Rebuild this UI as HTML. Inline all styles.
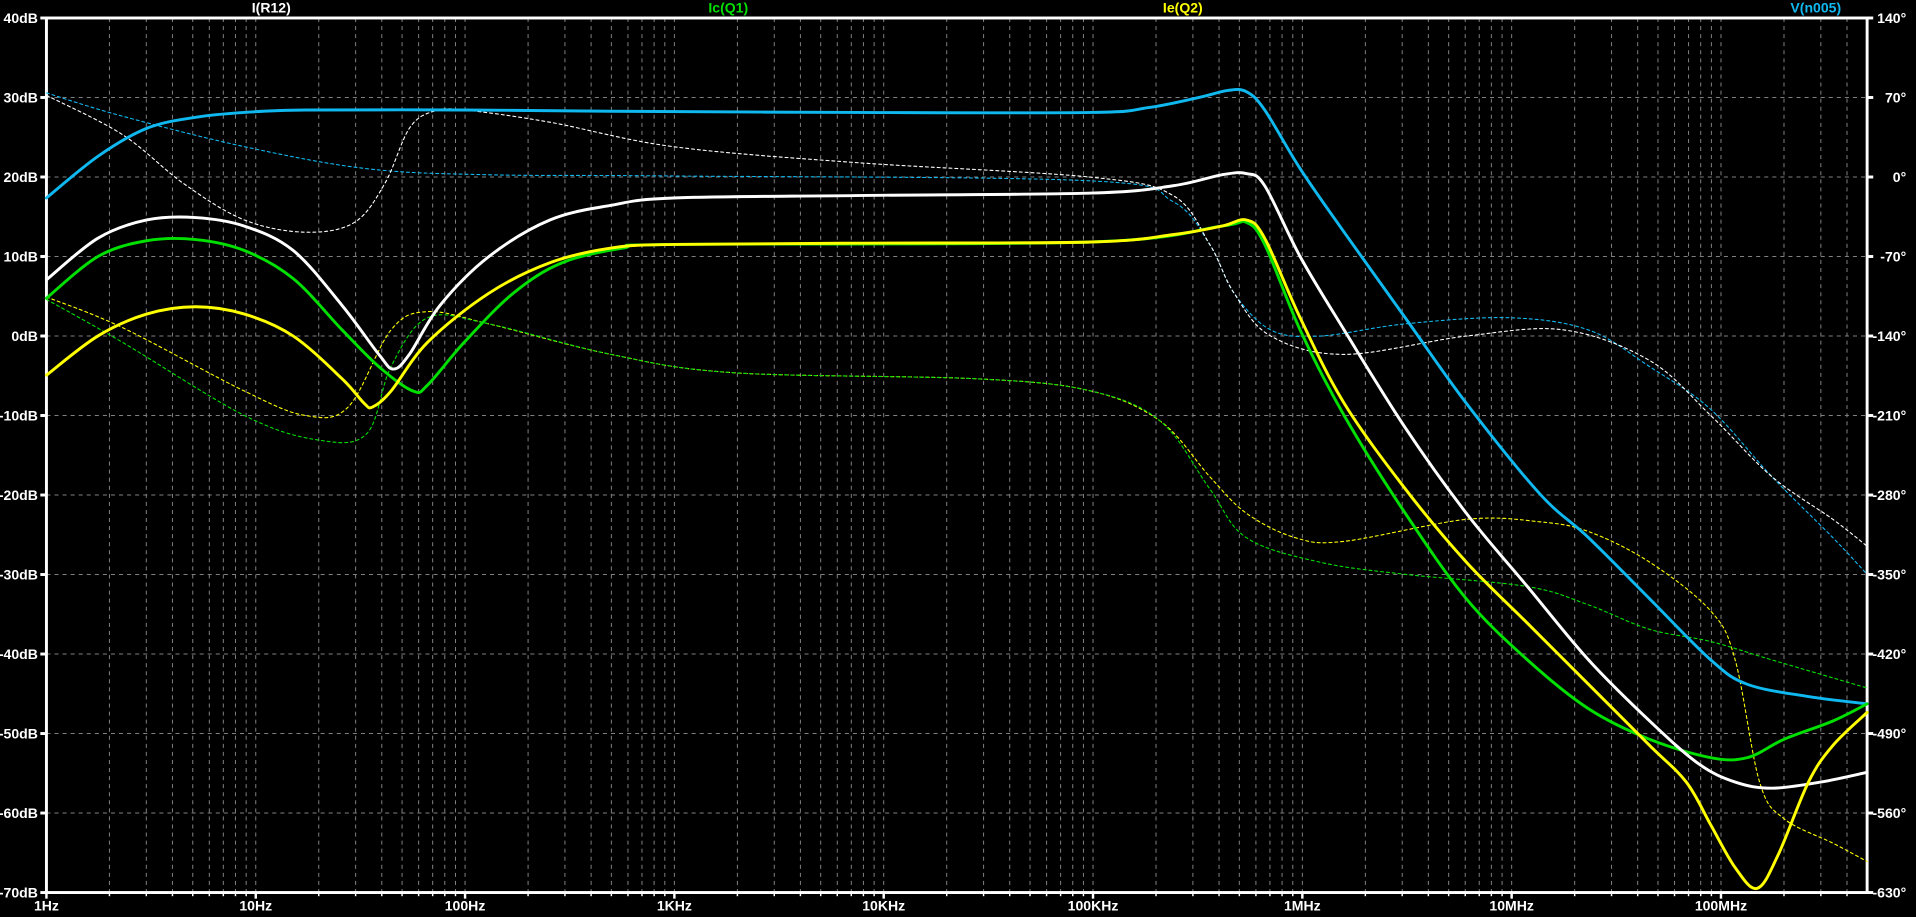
<!DOCTYPE html>
<html><head><meta charset="utf-8"><style>
html,body{margin:0;padding:0;background:#000;overflow:hidden}
svg{display:block}
text{font-family:"Liberation Sans",sans-serif;font-weight:bold;fill:#fff;font-size:11.5px}
</style></head><body>
<svg id="s" width="1916" height="917" viewBox="0 0 1568 750.4" xmlns="http://www.w3.org/2000/svg">
<rect width="1568" height="750.4" fill="#000"/>
<g id="grid" stroke="#808080" stroke-width="0.82" stroke-dasharray="3.3 3.3" fill="none"></g>
<g id="axes" stroke="#fff" fill="none"></g>
<g id="labels"></g>
<g id="traces" fill="none" stroke-linejoin="round" stroke-linecap="round"></g>
<text x="222" y="10" text-anchor="middle">I(R12)</text>
<text x="596" y="10" text-anchor="middle" style="fill:#00e000">Ic(Q1)</text>
<text x="968" y="10" text-anchor="middle" style="fill:#ffff00">Ie(Q2)</text>
<text x="1486" y="10" text-anchor="middle" style="fill:#10b8f0">V(n005)</text>
</svg>
<script>
var NS="http://www.w3.org/2000/svg";
var L=38,R=1528,T=14.7,B=730.4,DY=(B-T)/11,DEC=171.3;
function el(p,n,a,t){var e=document.createElementNS(NS,n);for(var k in a)e.setAttribute(k,a[k]);if(t)e.textContent=t;document.getElementById(p).appendChild(e);return e;}
var db=[40,30,20,10,0,-10,-20,-30,-40,-50,-60,-70];
var ph=[140,70,0,-70,-140,-210,-280,-350,-420,-490,-560,-630];
for(var i=0;i<12;i++){var y=T+i*DY;
 if(i>0&&i<11)el("grid","line",{x1:L,x2:R,y1:y,y2:y});
 el("axes","line",{x1:L-5,x2:L,y1:y,y2:y,"stroke-width":2.4});
 el("axes","line",{x1:R,x2:R+5,y1:y,y2:y,"stroke-width":2.4});
 el("labels","text",{x:L-7,y:y+4,"text-anchor":"end"},db[i]+"dB");
 el("labels","text",{x:1560,y:y+4,"text-anchor":"end"},ph[i]+"°");
}
var xl=["1Hz","10Hz","100Hz","1KHz","10KHz","100KHz","1MHz","10MHz","100MHz"];
for(var d=0;d<9;d++){for(var m=1;m<10;m++){var x=L+DEC*(d+Math.log10(m));if(x>R)break;
 if(!(d==0&&m==1))el("grid","line",{x1:x,x2:x,y1:T,y2:B});
 el("axes","line",{x1:x,x2:x,y1:B,y2:B+(m==1?5:3),"stroke-width":(m==1?2:1.2)});
 if(m==1)el("labels","text",{x:x,y:745,"text-anchor":"middle"},xl[d]);
}}
el("axes","rect",{x:L,y:T,width:R-L,height:B-T,"stroke-width":2.4});
function path(pts){var d="M"+pts[0][0]+","+pts[0][1];
 for(var i=0;i<pts.length-1;i++){var p0=pts[i-1]||pts[i],p1=pts[i],p2=pts[i+1],p3=pts[i+2]||p2;
  d+=" C"+(p1[0]+(p2[0]-p0[0])/6)+","+(p1[1]+(p2[1]-p0[1])/6)+" "+(p2[0]-(p3[0]-p1[0])/6)+","+(p2[1]-(p3[1]-p1[1])/6)+" "+p2[0]+","+p2[1];}
 return d;}
function tr(pts,c,dot){el("traces","path",dot?{d:path(pts),stroke:c,"stroke-width":0.9,"stroke-dasharray":"2.4 2.4"}:{d:path(pts),stroke:c,"stroke-width":2.4});}
var BL="#10b8f0",GR="#00e000",YE="#ffff00",WH="#ffffff";
tr([[38,76],[100,95],[200,120],[300,138],[400,143],[551,144],[893,148],[960,165],[990,200],[1010,240],[1040,270],[1080,275],[1150,265],[1235,260],[1300,270],[1350,300],[1400,335],[1450,390],[1500,440],[1528,470]],BL,1);
tr([[38,78],[100,110],[150,150],[200,180],[250,190],[290,182],[315,150],[335,105],[355,91],[380,90],[450,100],[551,120],[700,133],[893,145],[960,160],[990,200],[1010,240],[1040,275],[1100,290],[1200,275],[1280,270],[1350,295],[1400,340],[1450,390],[1500,425],[1528,447]],WH,1);
tr([[38,243],[100,268],[200,320],[250,340],[285,333],[320,270],[350,255],[400,265],[500,290],[600,305],[800,310],[893,320],[950,345],[990,390],[1020,420],[1060,440],[1100,443],[1200,425],[1260,427],[1300,435],[1350,460],[1400,500],[1420,540],[1440,640],[1460,670],[1500,690],[1528,705]],YE,1);
tr([[38,245],[100,280],[200,340],[260,360],[300,355],[320,300],[350,260],[400,265],[500,290],[600,305],[800,310],[893,320],[950,345],[990,400],[1020,440],[1080,460],[1150,470],[1250,480],[1300,495],[1350,515],[1400,525],[1450,540],[1528,563]],GR,1);
tr([[38,162],[80,128],[120,105],[160,96],[200,92],[250,90],[380,90],[500,91],[700,92],[893,92],[940,88],[980,80],[1005,74],[1020,75],[1035,90],[1064,138],[1100,190],[1150,260],[1200,330],[1260,404],[1300,440],[1350,490],[1400,540],[1430,560],[1480,570],[1528,576]],BL);
tr([[38,244],[80,210],[120,197],[160,196],[200,205],[240,228],[280,270],[310,300],[338,320],[350,315],[380,280],[420,240],[460,215],[510,203],[551,200],[893,198],[1000,185],[1020,182],[1035,200],[1064,270],[1100,340],[1150,420],[1200,490],[1250,540],[1300,580],[1350,605],[1400,620],[1430,620],[1460,605],[1500,590],[1528,576]],GR);
tr([[38,229],[80,195],[120,180],[160,178],[200,185],[240,205],[280,250],[310,290],[322,302],[335,290],[360,250],[400,210],[450,180],[500,168],[551,162],[700,160],[893,158],[960,152],[1000,143],[1020,142],[1035,152],[1064,210],[1100,270],[1150,350],[1200,420],[1250,480],[1300,540],[1350,590],[1390,625],[1420,640],[1450,645],[1490,640],[1528,632]],WH);
tr([[38,307],[80,275],[120,257],[160,251],[200,257],[240,275],[280,310],[298,330],[305,333],[320,320],[350,280],[400,240],[450,215],[500,203],[551,200],[700,199],[893,198],[960,192],[1000,185],[1020,180],[1035,195],[1064,260],[1100,330],[1150,400],[1200,460],[1250,510],[1300,560],[1350,610],[1380,640],[1400,675],[1420,710],[1438,727],[1455,700],[1480,640],[1500,610],[1528,583]],YE);
</script>
</body></html>
